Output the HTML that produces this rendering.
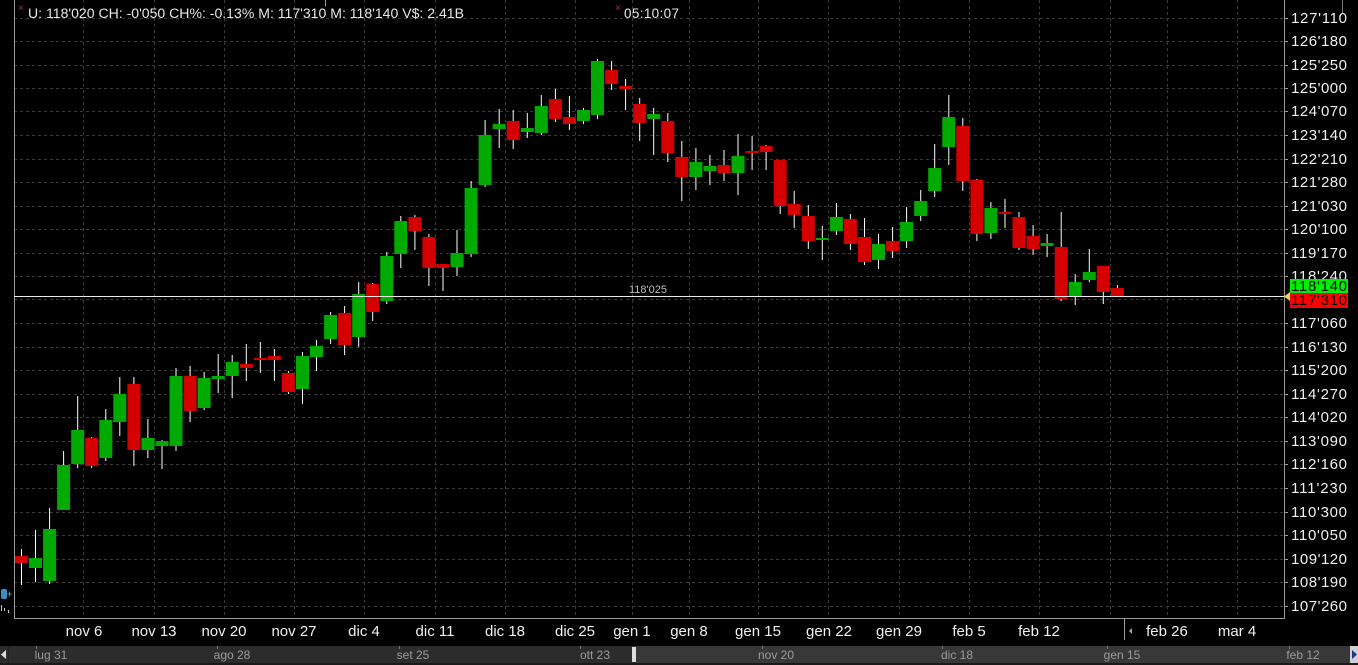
<!DOCTYPE html>
<html><head><meta charset="utf-8"><style>
html,body{margin:0;padding:0;background:#000;width:1358px;height:665px;overflow:hidden}
svg{display:block}
text{font-family:"Liberation Sans",sans-serif}
.w{fill:#fff}.g{fill:#00aa00}.r{fill:#d40000}
.ax{fill:#f0f0f0;font-size:15px}
.dt{fill:#f0f0f0;font-size:15px;text-anchor:middle}
.sb{fill:#9a9a9a;font-size:12px;font-family:"Liberation Serif",serif;text-anchor:middle}
</style></head><body>
<svg width="1358" height="665" viewBox="0 0 1358 665" xmlns="http://www.w3.org/2000/svg">
<rect width="1358" height="665" fill="#000"/>
<g stroke="#3a3a3a" stroke-width="1" stroke-dasharray="3,3" fill="none">
<path d="M14 18.5H1284M14 41.5H1284M14 65.5H1284M14 88.5H1284M14 111.5H1284M14 135.5H1284M14 159.5H1284M14 182.5H1284M14 206.5H1284M14 229.5H1284M14 253.5H1284M14 276.5H1284M14 299.5H1284M14 323.5H1284M14 347.5H1284M14 370.5H1284M14 394.5H1284M14 417.5H1284M14 441.5H1284M14 464.5H1284M14 488.5H1284M14 512.5H1284M14 535.5H1284M14 559.5H1284M14 582.5H1284M14 606.5H1284"/>
<path d="M83.5 0V618M154.5 0V618M224.5 0V618M294.5 0V618M364.5 0V618M435.5 0V618M505.5 0V618M575.5 0V618M632.5 0V618M689.5 0V618M758.5 0V618M828.5 0V618M899.5 0V618M969.5 0V618M1039.5 0V618M1110.5 0V618M1167.5 0V618M1237.5 0V618"/>
</g>
<path d="M14.5 0V618.5H1284.5V0" stroke="#9a9a9a" fill="none"/>
<path d="M1124.5 618V640" stroke="#9a9a9a"/>
<g stroke="#9a9a9a"><path d="M1284 18.5h4M1284 41.5h4M1284 65.5h4M1284 88.5h4M1284 111.5h4M1284 135.5h4M1284 159.5h4M1284 182.5h4M1284 206.5h4M1284 229.5h4M1284 253.5h4M1284 276.5h4M1284 323.5h4M1284 347.5h4M1284 370.5h4M1284 394.5h4M1284 417.5h4M1284 441.5h4M1284 464.5h4M1284 488.5h4M1284 512.5h4M1284 535.5h4M1284 559.5h4M1284 582.5h4M1284 606.5h4"/></g>
<path d="M325.5 0V6" stroke="#9a9a9a"/>
<path d="M1342.5 0V14" stroke="#777"/>

<g>
<g transform="translate(21.5)"><rect class="w" x="-0.5" y="549" width="1" height="36"/><rect class="r" x="-6.5" y="556" width="13" height="7"/></g>
<g transform="translate(35.5)"><rect class="w" x="-0.5" y="530" width="1" height="52"/><rect class="g" x="-6.5" y="558" width="13" height="10"/></g>
<g transform="translate(49.6)"><rect class="w" x="-0.5" y="508" width="1" height="76"/><rect class="g" x="-6.5" y="529" width="13" height="52"/></g>
<g transform="translate(63.6)"><rect class="w" x="-0.5" y="451" width="1" height="59"/><rect class="g" x="-6.5" y="465" width="13" height="45"/></g>
<g transform="translate(77.7)"><rect class="w" x="-0.5" y="396" width="1" height="72"/><rect class="g" x="-6.5" y="430" width="13" height="34"/></g>
<g transform="translate(91.7)"><rect class="w" x="-0.5" y="437" width="1" height="31"/><rect class="r" x="-6.5" y="438" width="13" height="28"/></g>
<g transform="translate(105.8)"><rect class="w" x="-0.5" y="409" width="1" height="52"/><rect class="g" x="-6.5" y="420" width="13" height="38"/></g>
<g transform="translate(119.8)"><rect class="w" x="-0.5" y="377" width="1" height="59"/><rect class="g" x="-6.5" y="394" width="13" height="28"/></g>
<g transform="translate(133.9)"><rect class="w" x="-0.5" y="377" width="1" height="89"/><rect class="r" x="-6.5" y="384" width="13" height="66"/></g>
<g transform="translate(147.9)"><rect class="w" x="-0.5" y="419" width="1" height="39"/><rect class="g" x="-6.5" y="438" width="13" height="12"/></g>
<g transform="translate(162)"><rect class="w" x="-0.5" y="440" width="1" height="29"/><rect class="g" x="-6.5" y="441" width="13" height="5"/></g>
<g transform="translate(176)"><rect class="w" x="-0.5" y="368" width="1" height="83"/><rect class="g" x="-6.5" y="376" width="13" height="70"/></g>
<g transform="translate(190.1)"><rect class="w" x="-0.5" y="366" width="1" height="56"/><rect class="r" x="-6.5" y="376" width="13" height="35"/></g>
<g transform="translate(204.1)"><rect class="w" x="-0.5" y="372" width="1" height="38"/><rect class="g" x="-6.5" y="378" width="13" height="30"/></g>
<g transform="translate(218.2)"><rect class="w" x="-0.5" y="354" width="1" height="39"/><rect class="g" x="-6.5" y="376" width="13" height="3"/></g>
<g transform="translate(232.2)"><rect class="w" x="-0.5" y="355" width="1" height="43"/><rect class="g" x="-6.5" y="362" width="13" height="14"/></g>
<g transform="translate(246.3)"><rect class="w" x="-0.5" y="344" width="1" height="37"/><rect class="r" x="-6.5" y="364" width="13" height="4"/></g>
<g transform="translate(260.3)"><rect class="w" x="-0.5" y="342" width="1" height="31"/><rect class="r" x="-6.5" y="358" width="13" height="2"/></g>
<g transform="translate(274.4)"><rect class="w" x="-0.5" y="349" width="1" height="32"/><rect class="r" x="-6.5" y="356" width="13" height="4"/></g>
<g transform="translate(288.4)"><rect class="w" x="-0.5" y="371" width="1" height="23"/><rect class="r" x="-6.5" y="373" width="13" height="19"/></g>
<g transform="translate(302.5)"><rect class="w" x="-0.5" y="352" width="1" height="52"/><rect class="g" x="-6.5" y="356" width="13" height="33"/></g>
<g transform="translate(316.5)"><rect class="w" x="-0.5" y="340" width="1" height="31"/><rect class="g" x="-6.5" y="346" width="13" height="11"/></g>
<g transform="translate(330.6)"><rect class="w" x="-0.5" y="312" width="1" height="32"/><rect class="g" x="-6.5" y="315" width="13" height="24"/></g>
<g transform="translate(344.6)"><rect class="w" x="-0.5" y="306" width="1" height="49"/><rect class="r" x="-6.5" y="313" width="13" height="32"/></g>
<g transform="translate(358.7)"><rect class="w" x="-0.5" y="282" width="1" height="65"/><rect class="g" x="-6.5" y="294" width="13" height="43"/></g>
<g transform="translate(372.7)"><rect class="w" x="-0.5" y="283" width="1" height="38"/><rect class="r" x="-6.5" y="284" width="13" height="28"/></g>
<g transform="translate(386.8)"><rect class="w" x="-0.5" y="252" width="1" height="52"/><rect class="g" x="-6.5" y="256" width="13" height="45"/></g>
<g transform="translate(400.8)"><rect class="w" x="-0.5" y="216" width="1" height="52"/><rect class="g" x="-6.5" y="221" width="13" height="33"/></g>
<g transform="translate(414.9)"><rect class="w" x="-0.5" y="215" width="1" height="35"/><rect class="r" x="-6.5" y="217" width="13" height="14"/></g>
<g transform="translate(428.9)"><rect class="w" x="-0.5" y="234" width="1" height="52"/><rect class="r" x="-6.5" y="237" width="13" height="31"/></g>
<g transform="translate(443)"><rect class="w" x="-0.5" y="264" width="1" height="27"/><rect class="r" x="-6.5" y="264" width="13" height="4"/></g>
<g transform="translate(457)"><rect class="w" x="-0.5" y="230" width="1" height="46"/><rect class="g" x="-6.5" y="253" width="13" height="14"/></g>
<g transform="translate(471.1)"><rect class="w" x="-0.5" y="181" width="1" height="76"/><rect class="g" x="-6.5" y="188" width="13" height="66"/></g>
<g transform="translate(485.1)"><rect class="w" x="-0.5" y="120" width="1" height="67"/><rect class="g" x="-6.5" y="135" width="13" height="50"/></g>
<g transform="translate(499.2)"><rect class="w" x="-0.5" y="109" width="1" height="39"/><rect class="g" x="-6.5" y="124" width="13" height="5"/></g>
<g transform="translate(513.2)"><rect class="w" x="-0.5" y="110" width="1" height="39"/><rect class="r" x="-6.5" y="121" width="13" height="19"/></g>
<g transform="translate(527.3)"><rect class="w" x="-0.5" y="113" width="1" height="25"/><rect class="g" x="-6.5" y="128" width="13" height="4"/></g>
<g transform="translate(541.3)"><rect class="w" x="-0.5" y="95" width="1" height="40"/><rect class="g" x="-6.5" y="106" width="13" height="27"/></g>
<g transform="translate(555.4)"><rect class="w" x="-0.5" y="89" width="1" height="33"/><rect class="r" x="-6.5" y="99" width="13" height="20"/></g>
<g transform="translate(569.4)"><rect class="w" x="-0.5" y="96" width="1" height="34"/><rect class="r" x="-6.5" y="117" width="13" height="7"/></g>
<g transform="translate(583.5)"><rect class="w" x="-0.5" y="108" width="1" height="16"/><rect class="g" x="-6.5" y="110" width="13" height="11"/></g>
<g transform="translate(597.5)"><rect class="w" x="-0.5" y="59" width="1" height="60"/><rect class="g" x="-6.5" y="61" width="13" height="54"/></g>
<g transform="translate(611.6)"><rect class="w" x="-0.5" y="61" width="1" height="29"/><rect class="r" x="-6.5" y="70" width="13" height="14"/></g>
<g transform="translate(625.6)"><rect class="w" x="-0.5" y="79" width="1" height="31"/><rect class="r" x="-6.5" y="86" width="13" height="3"/></g>
<g transform="translate(639.7)"><rect class="w" x="-0.5" y="98" width="1" height="43"/><rect class="r" x="-6.5" y="104" width="13" height="19"/></g>
<g transform="translate(653.7)"><rect class="w" x="-0.5" y="108" width="1" height="47"/><rect class="g" x="-6.5" y="114" width="13" height="5"/></g>
<g transform="translate(667.8)"><rect class="w" x="-0.5" y="113" width="1" height="49"/><rect class="r" x="-6.5" y="121" width="13" height="32"/></g>
<g transform="translate(681.8)"><rect class="w" x="-0.5" y="141" width="1" height="60"/><rect class="r" x="-6.5" y="157" width="13" height="20"/></g>
<g transform="translate(695.9)"><rect class="w" x="-0.5" y="148" width="1" height="42"/><rect class="g" x="-6.5" y="162" width="13" height="15"/></g>
<g transform="translate(709.9)"><rect class="w" x="-0.5" y="155" width="1" height="30"/><rect class="g" x="-6.5" y="166" width="13" height="5"/></g>
<g transform="translate(724)"><rect class="w" x="-0.5" y="150" width="1" height="31"/><rect class="r" x="-6.5" y="165" width="13" height="8"/></g>
<g transform="translate(738)"><rect class="w" x="-0.5" y="134" width="1" height="61"/><rect class="g" x="-6.5" y="156" width="13" height="17"/></g>
<g transform="translate(752.1)"><rect class="w" x="-0.5" y="136" width="1" height="34"/><rect class="r" x="-6.5" y="151" width="13" height="2"/></g>
<g transform="translate(766.1)"><rect class="w" x="-0.5" y="145" width="1" height="25"/><rect class="r" x="-6.5" y="146" width="13" height="6"/></g>
<g transform="translate(780.2)"><rect class="w" x="-0.5" y="160" width="1" height="54"/><rect class="r" x="-6.5" y="160" width="13" height="46"/></g>
<g transform="translate(794.2)"><rect class="w" x="-0.5" y="191" width="1" height="37"/><rect class="r" x="-6.5" y="204" width="13" height="11"/></g>
<g transform="translate(808.3)"><rect class="w" x="-0.5" y="205" width="1" height="44"/><rect class="r" x="-6.5" y="216" width="13" height="25"/></g>
<g transform="translate(822.3)"><rect class="w" x="-0.5" y="226" width="1" height="34"/><rect class="g" x="-6.5" y="238" width="13" height="2"/></g>
<g transform="translate(836.4)"><rect class="w" x="-0.5" y="203" width="1" height="32"/><rect class="g" x="-6.5" y="217" width="13" height="14"/></g>
<g transform="translate(850.4)"><rect class="w" x="-0.5" y="214" width="1" height="36"/><rect class="r" x="-6.5" y="219" width="13" height="25"/></g>
<g transform="translate(864.5)"><rect class="w" x="-0.5" y="218" width="1" height="47"/><rect class="r" x="-6.5" y="237" width="13" height="25"/></g>
<g transform="translate(878.5)"><rect class="w" x="-0.5" y="234" width="1" height="35"/><rect class="g" x="-6.5" y="244" width="13" height="16"/></g>
<g transform="translate(892.6)"><rect class="w" x="-0.5" y="227" width="1" height="31"/><rect class="r" x="-6.5" y="241" width="13" height="10"/></g>
<g transform="translate(906.6)"><rect class="w" x="-0.5" y="207" width="1" height="41"/><rect class="g" x="-6.5" y="222" width="13" height="19"/></g>
<g transform="translate(920.7)"><rect class="w" x="-0.5" y="190" width="1" height="31"/><rect class="g" x="-6.5" y="201" width="13" height="15"/></g>
<g transform="translate(934.7)"><rect class="w" x="-0.5" y="144" width="1" height="53"/><rect class="g" x="-6.5" y="168" width="13" height="23"/></g>
<g transform="translate(948.8)"><rect class="w" x="-0.5" y="95" width="1" height="70"/><rect class="g" x="-6.5" y="117" width="13" height="30"/></g>
<g transform="translate(962.8)"><rect class="w" x="-0.5" y="118" width="1" height="73"/><rect class="r" x="-6.5" y="126" width="13" height="55"/></g>
<g transform="translate(976.9)"><rect class="w" x="-0.5" y="179" width="1" height="62"/><rect class="r" x="-6.5" y="180" width="13" height="54"/></g>
<g transform="translate(990.9)"><rect class="w" x="-0.5" y="202" width="1" height="37"/><rect class="g" x="-6.5" y="208" width="13" height="25"/></g>
<g transform="translate(1005)"><rect class="w" x="-0.5" y="199" width="1" height="29"/><rect class="r" x="-6.5" y="212" width="13" height="2"/></g>
<g transform="translate(1019)"><rect class="w" x="-0.5" y="212" width="1" height="38"/><rect class="r" x="-6.5" y="217" width="13" height="31"/></g>
<g transform="translate(1033.1)"><rect class="w" x="-0.5" y="225" width="1" height="30"/><rect class="r" x="-6.5" y="236" width="13" height="13"/></g>
<g transform="translate(1047.1)"><rect class="w" x="-0.5" y="234" width="1" height="23"/><rect class="g" x="-6.5" y="243" width="13" height="3"/></g>
<g transform="translate(1061.2)"><rect class="w" x="-0.5" y="212" width="1" height="89"/><rect class="r" x="-6.5" y="247" width="13" height="52"/></g>
<g transform="translate(1075.2)"><rect class="w" x="-0.5" y="274" width="1" height="31"/><rect class="g" x="-6.5" y="282" width="13" height="14"/></g>
<g transform="translate(1089.3)"><rect class="w" x="-0.5" y="249" width="1" height="33"/><rect class="g" x="-6.5" y="272" width="13" height="8"/></g>
<g transform="translate(1103.3)"><rect class="w" x="-0.5" y="266" width="1" height="38"/><rect class="r" x="-6.5" y="266" width="13" height="26"/></g>
<g transform="translate(1117.4)"><rect class="w" x="-0.5" y="285" width="1" height="11"/><rect class="r" x="-6.5" y="288" width="13" height="8"/></g>
</g>

<path d="M14 296.5H1284" stroke="#e8e8e8" stroke-width="1"/>
<text x="648" y="293" fill="#bdbdbd" font-size="11" text-anchor="middle">118'025</text>

<g class="ax">
<text x="1291" y="23" textLength="56">127'110</text><text x="1291" y="46" textLength="56">126'180</text><text x="1291" y="70" textLength="56">125'250</text><text x="1291" y="93" textLength="56">125'000</text><text x="1291" y="116" textLength="56">124'070</text><text x="1291" y="140" textLength="56">123'140</text><text x="1291" y="164" textLength="56">122'210</text><text x="1291" y="187" textLength="56">121'280</text><text x="1291" y="211" textLength="56">121'030</text><text x="1291" y="234" textLength="56">120'100</text><text x="1291" y="258" textLength="56">119'170</text><text x="1291" y="281" textLength="56">118'240</text>
<text x="1291" y="328" textLength="56">117'060</text><text x="1291" y="352" textLength="56">116'130</text><text x="1291" y="375" textLength="56">115'200</text><text x="1291" y="399" textLength="56">114'270</text><text x="1291" y="422" textLength="56">114'020</text><text x="1291" y="446" textLength="56">113'090</text><text x="1291" y="469" textLength="56">112'160</text><text x="1291" y="493" textLength="56">111'230</text><text x="1291" y="517" textLength="56">110'300</text><text x="1291" y="540" textLength="56">110'050</text><text x="1291" y="564" textLength="56">109'120</text><text x="1291" y="587" textLength="56">108'190</text><text x="1291" y="611" textLength="56">107'260</text>
</g>
<rect x="1290" y="279" width="58" height="14" fill="#00ee00"/>
<text x="1291" y="291" font-size="15" fill="#000" textLength="56">118'140</text>
<rect x="1290" y="293" width="58" height="15" fill="#ff0000"/>
<text x="1291" y="305" font-size="15" fill="#000" textLength="56">117'310</text>
<path d="M1284 296.5L1290 292V301Z" fill="#e8d060"/>

<g class="dt">
<text x="84" y="636">nov 6</text><text x="154" y="636">nov 13</text><text x="224" y="636">nov 20</text><text x="294" y="636">nov 27</text><text x="364" y="636">dic 4</text><text x="435" y="636">dic 11</text><text x="505" y="636">dic 18</text><text x="575" y="636">dic 25</text><text x="632" y="636">gen 1</text><text x="689" y="636">gen 8</text><text x="758" y="636">gen 15</text><text x="829" y="636">gen 22</text><text x="899" y="636">gen 29</text><text x="969" y="636">feb 5</text><text x="1039" y="636">feb 12</text><text x="1167" y="636">feb 26</text><text x="1237" y="636">mar 4</text>
</g>
<path d="M1129 631l3-3v6z" fill="#aaa"/>

<g fill="#e8e8e8"><text x="28" y="18" font-size="13.5" textLength="436" lengthAdjust="spacingAndGlyphs">U: 118'020 CH: -0'050 CH%: -0.13% M: 117'310 M: 118'140 V$: 2.41B</text><text x="624" y="18" font-size="13.5" textLength="55">05:10:07</text></g>
<text x="18" y="11" fill="#9a3a3a" font-size="10">×</text>
<text x="615" y="11" fill="#9a3a3a" font-size="10">×</text>

<rect x="1" y="589" width="6" height="10" rx="2" fill="#3c8dc8"/>
<path d="M7 594h5M9.5 591.5v5" stroke="#2aa060"/>
<path d="M1.5 605v6M4.5 608v3M8.5 610v3" stroke="#ccc"/>

<rect x="0" y="646" width="1358" height="17" fill="#2c2c2c"/>
<rect x="636" y="646" width="714" height="17" fill="#383838"/>
<rect x="8" y="646" width="1" height="17" fill="#222"/>
<path d="M1 654.5L6 650V659Z" fill="#ddd"/>
<rect x="632" y="647" width="4" height="15" fill="#ddd"/>
<rect x="1350" y="646" width="8" height="17" fill="#d0d0d0"/>
<path d="M1352 650V659L1357 654.5Z" fill="#1a3a8a"/>
<rect x="0" y="663" width="1358" height="2" fill="#1a1a1a"/>
<g stroke="#777"><path d="M36.5 646v3M217.5 646v3M399.5 646v3M580.5 646v3M762.5 646v3M942.5 646v3M1107.5 646v3M1289.5 646v3"/></g>
<g class="sb">
<text x="51" y="659">lug 31</text><text x="232" y="659">ago 28</text><text x="413" y="659">set 25</text><text x="595" y="659">ott 23</text><text x="776" y="659">nov 20</text><text x="957" y="659">dic 18</text><text x="1122" y="659">gen 15</text><text x="1303" y="659">feb 12</text>
</g>
</svg>
</body></html>
